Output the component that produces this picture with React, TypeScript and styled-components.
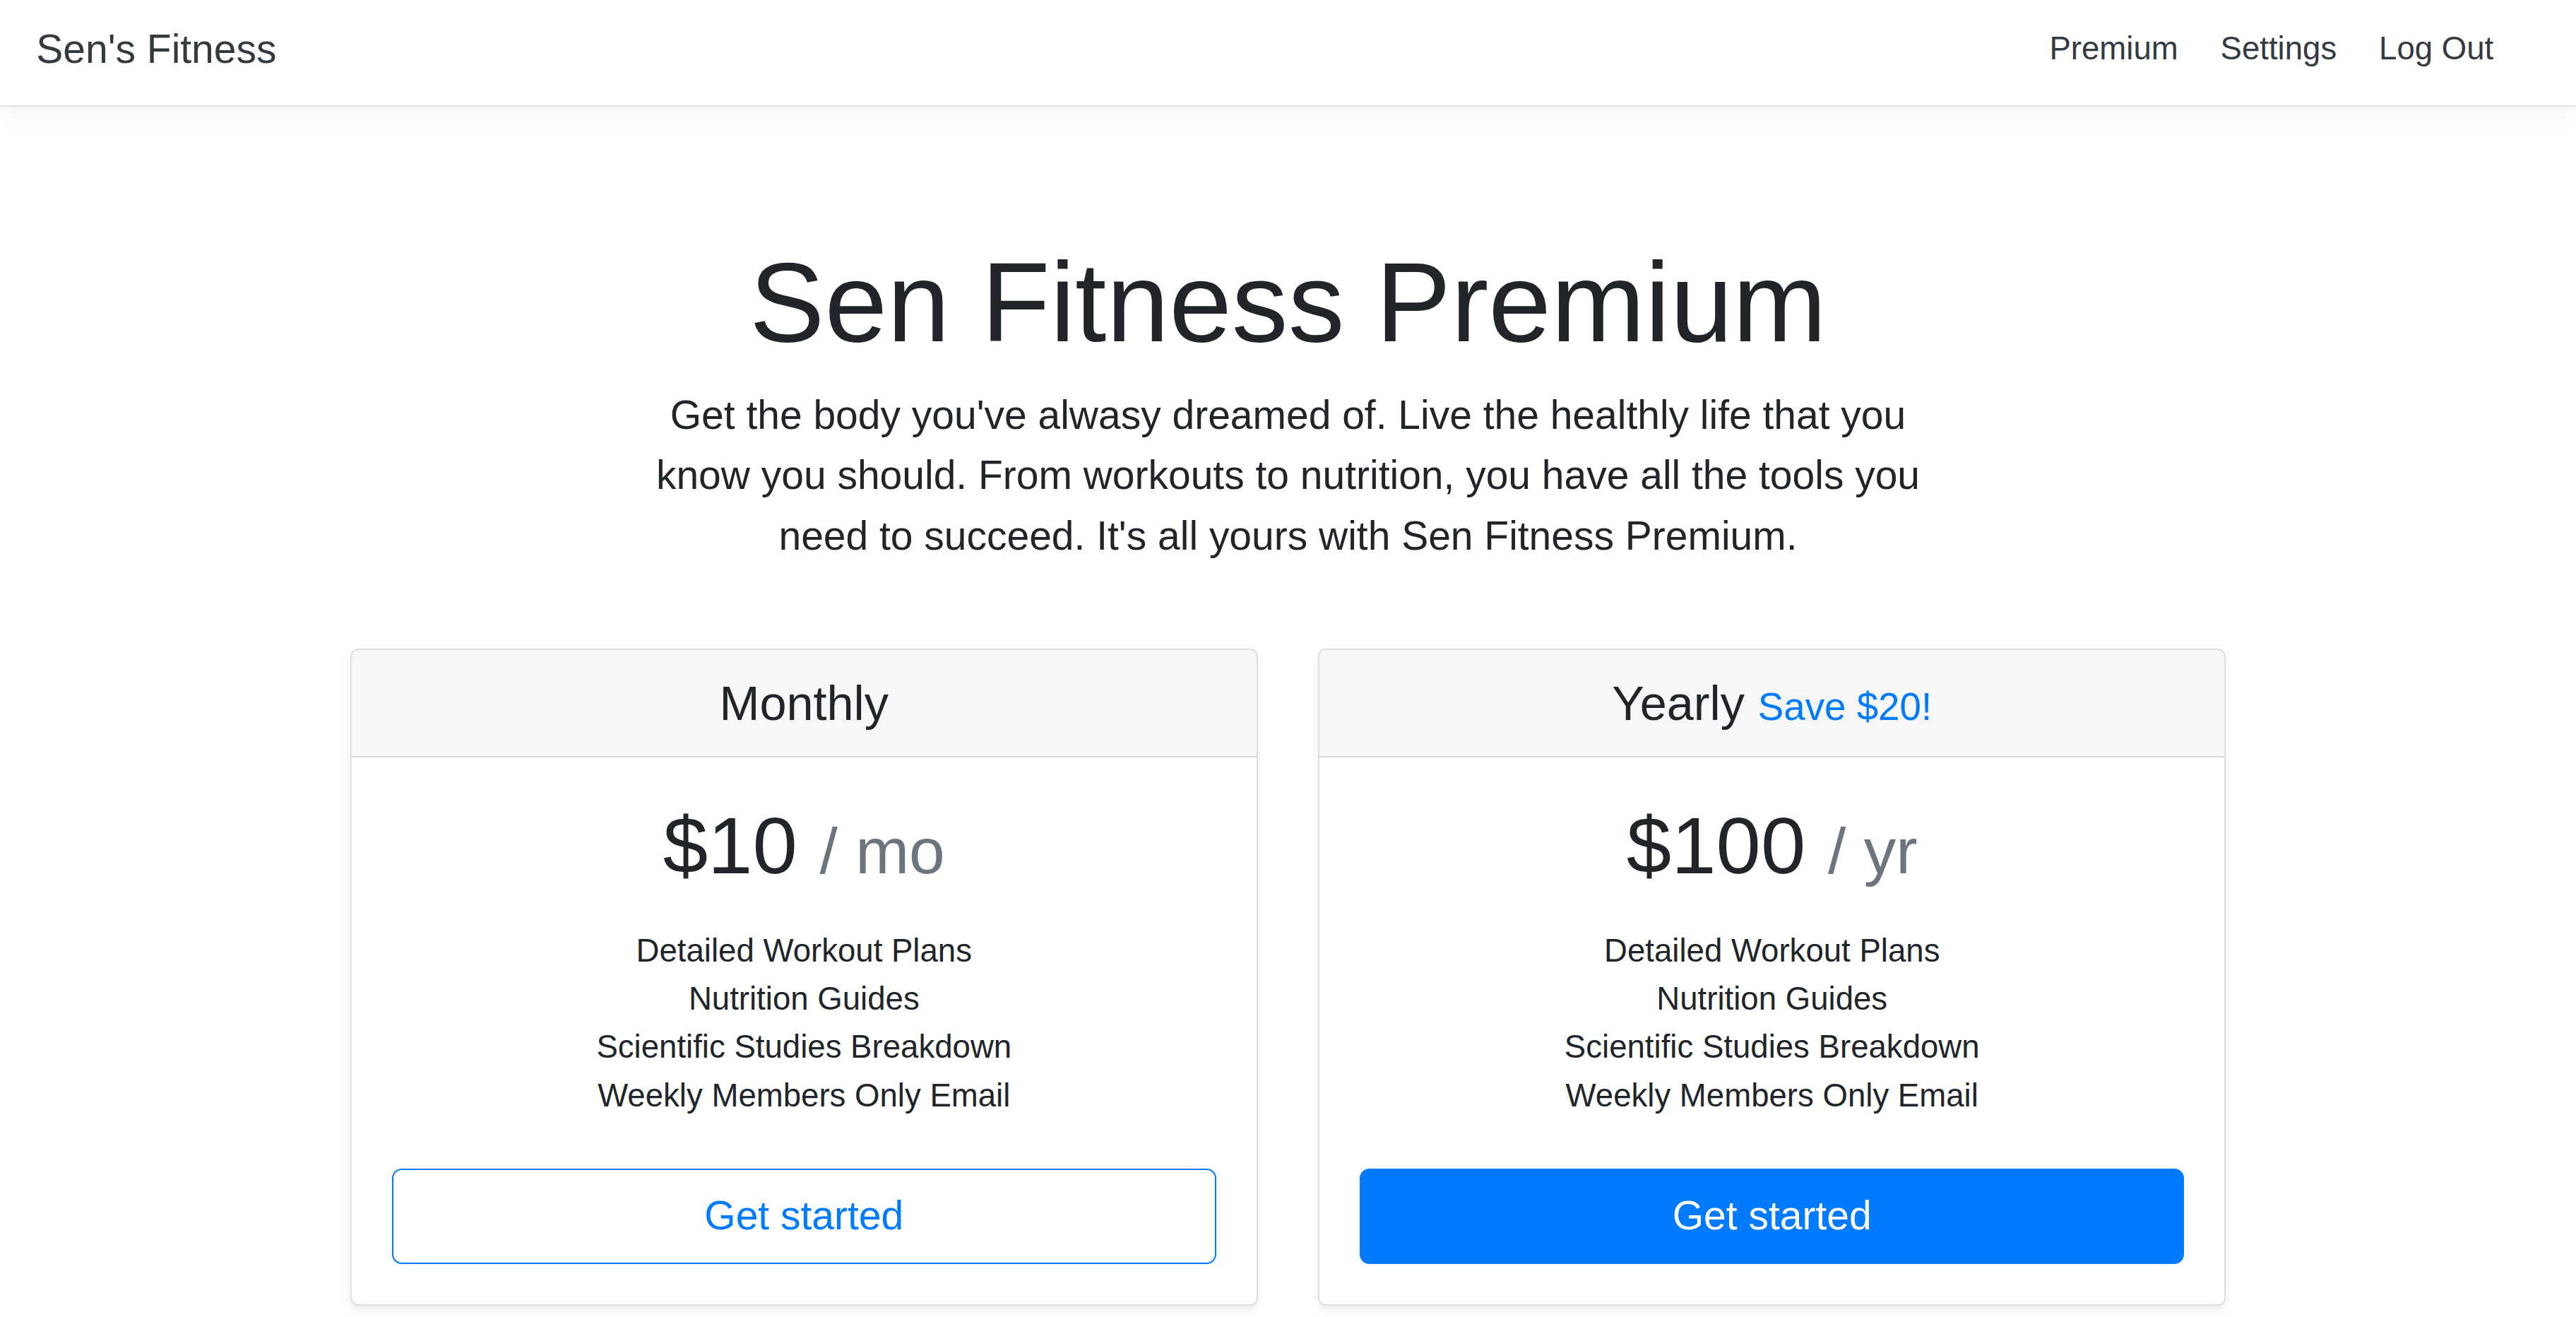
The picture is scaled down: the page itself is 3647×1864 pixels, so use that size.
import styled, { createGlobalStyle } from "styled-components";

// reference was shot at a 1280px-wide layout, scaled up to the 3647px window
const S = 3647 / 1280;
const u = (n: number) => `${+(n * S).toFixed(3)}px`;

const GlobalStyle = createGlobalStyle`
  *, *::before, *::after {
    box-sizing: border-box;
  }
  html, body {
    margin: 0;
    padding: 0;
  }
  body {
    background: #fff;
    color: #212529;
    font-family: "Liberation Sans", Arial, sans-serif;
    font-size: ${u(16)};
    line-height: 1.5;
  }
`;

const Navbar = styled.header`
  display: flex;
  align-items: center;
  height: ${u(53)};
  padding: 0 ${u(30.5)} ${u(4)} ${u(18)};
  margin-bottom: ${u(16)};
  background: #fff;
  border-bottom: ${u(1)} solid #dee2e6;
  box-shadow: 0 ${u(4)} ${u(12)} rgba(0, 0, 0, 0.05);
`;

const Brand = styled.h5`
  margin: 0;
  font-size: ${u(20)};
  font-weight: 400;
  line-height: 1.2;
  color: #343a40;
`;

const Nav = styled.nav`
  display: flex;
  align-items: center;
  margin-left: auto;
`;

const NavLink = styled.a`
  padding: 0 ${u(10.5)};
  font-size: ${u(16)};
  line-height: 1.5;
  color: #343a40;
  text-decoration: none;
`;

const PricingHeader = styled.section`
  max-width: ${u(682)};
  margin: 0 auto;
  padding: ${u(48)} ${u(16)} ${u(24)};
  text-align: center;
`;

const Title = styled.h1`
  margin: 0 0 ${u(7)};
  font-size: ${u(56)};
  font-weight: 300;
  line-height: 1.2;
`;

const Lead = styled.p`
  margin: 0 0 ${u(17)};
  font-size: ${u(20)};
  font-weight: 300;
  line-height: 1.5;
`;

const Deck = styled.div`
  display: grid;
  grid-template-columns: repeat(2, ${u(451)});
  justify-content: center;
  column-gap: ${u(30)};
  text-align: center;
`;

const Card = styled.div`
  display: flex;
  flex-direction: column;
  margin-bottom: ${u(24)};
  background: #fff;
  border: ${u(1)} solid rgba(0, 0, 0, 0.125);
  border-radius: ${u(4)};
  box-shadow: 0 ${u(2)} ${u(4)} rgba(0, 0, 0, 0.075);
`;

const CardHeader = styled.div`
  padding: ${u(12)} ${u(20)};
  background: rgba(0, 0, 0, 0.03);
  border-bottom: ${u(1)} solid rgba(0, 0, 0, 0.125);
  border-radius: ${u(3)} ${u(3)} 0 0;
`;

const PlanName = styled.h4`
  margin: 0;
  font-size: ${u(24)};
  font-weight: 400;
  line-height: 1.2;
`;

const Save = styled.small`
  font-size: 80%;
  color: #007bff;
`;

const CardBody = styled.div`
  flex: 1;
  padding: ${u(20)};
`;

const Price = styled.h1`
  margin: 0 0 ${u(8)};
  font-size: ${u(40)};
  font-weight: 400;
  line-height: 1.2;
`;

const Per = styled.small`
  font-size: 80%;
  color: #6c757d;
`;

const Features = styled.ul`
  list-style: none;
  padding: 0;
  margin: ${u(16)} 0 ${u(24)};

  li {
    font-size: ${u(16)};
    line-height: 1.5;
  }
`;

const Button = styled.button<{ $outline?: boolean }>`
  display: block;
  width: 100%;
  padding: ${u(8)} ${u(16)};
  font-family: inherit;
  font-size: ${u(20)};
  line-height: 1.5;
  border: ${u(1)} solid #007bff;
  border-radius: ${u(4.8)};
  background: ${(p) => (p.$outline ? "transparent" : "#007bff")};
  color: ${(p) => (p.$outline ? "#007bff" : "#fff")};
  cursor: pointer;
`;

const features = [
  "Detailed Workout Plans",
  "Nutrition Guides",
  "Scientific Studies Breakdown",
  "Weekly Members Only Email",
];

const plans = [
  { name: "Monthly", save: "", price: "$10", per: "/ mo", outline: true },
  { name: "Yearly", save: "Save $20!", price: "$100", per: "/ yr", outline: false },
];

const App = () => {
  return (
    <>
      <GlobalStyle />
      <Navbar>
        <Brand>Sen's Fitness</Brand>
        <Nav>
          <NavLink href="#">Premium</NavLink>
          <NavLink href="#">Settings</NavLink>
          <NavLink href="#">Log Out</NavLink>
        </Nav>
      </Navbar>

      <PricingHeader>
        <Title>Sen Fitness Premium</Title>
        <Lead>
          Get the body you've alwasy dreamed of. Live the healthly life that you
          know you should. From workouts to nutrition, you have all the tools you
          need to succeed. It's all yours with Sen Fitness Premium.
        </Lead>
      </PricingHeader>

      <Deck>
        {plans.map((plan) => (
          <Card key={plan.name}>
            <CardHeader>
              <PlanName>
                {plan.name}
                {plan.save && (
                  <>
                    {" "}
                    <Save>{plan.save}</Save>
                  </>
                )}
              </PlanName>
            </CardHeader>
            <CardBody>
              <Price>
                {plan.price} <Per>{plan.per}</Per>
              </Price>
              <Features>
                {features.map((f) => (
                  <li key={f}>{f}</li>
                ))}
              </Features>
              <Button $outline={plan.outline}>Get started</Button>
            </CardBody>
          </Card>
        ))}
      </Deck>
    </>
  );
};

export default App;
